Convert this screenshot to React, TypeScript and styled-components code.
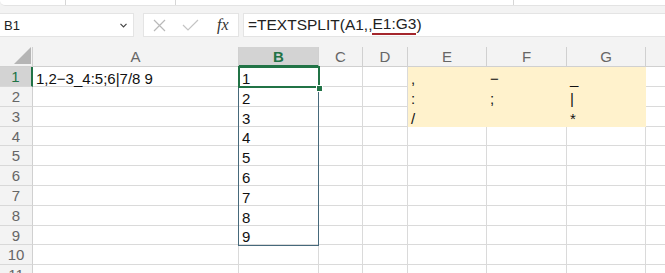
import React from 'react';
import styled, { createGlobalStyle } from 'styled-components';

const GREEN = '#217346';
const GRID = '#dadada';
const FILL = '#fff2cc';

const GlobalStyle = createGlobalStyle`
  html, body {
    margin: 0;
    padding: 0;
    background: #ffffff;
    overflow: hidden;
  }
  body {
    font-family: "Liberation Sans", Arial, sans-serif;
  }
`;

interface Column {
  key: string;
  width: number;
}

const columns: Column[] = [
  { key: 'A', width: 206 },
  { key: 'B', width: 80 },
  { key: 'C', width: 44 },
  { key: 'D', width: 45 },
  { key: 'E', width: 79 },
  { key: 'F', width: 80 },
  { key: 'G', width: 79 },
  { key: 'H', width: 60 },
];

const rowHeights = [20, 20, 20, 19, 20, 20, 20, 20, 19, 20, 20];

const cellText: Record<string, string> = {
  A1: '1,2−3_4:5;6|7/8 9',
  B1: '1',
  B2: '2',
  B3: '3',
  B4: '4',
  B5: '5',
  B6: '6',
  B7: '7',
  B8: '8',
  B9: '9',
  E1: ',',
  E2: ':',
  E3: '/',
  F1: '−',
  F2: ';',
  G1: '_',
  G2: '|',
  G3: '*',
};

const isFilled = (col: string, row: number) => ['E', 'F', 'G'].includes(col) && row <= 3;

const Page = styled.div`
  width: 665px;
  height: 273px;
  overflow: hidden;
  background: #f3f3f3;
`;

const TopStrip = styled.div`
  display: flex;
  height: 6px;
  background: #ffffff;
  border-bottom: 1px solid #e3e3e3;
  border-bottom-left-radius: 5px;
  box-sizing: border-box;
`;

const StripGroup = styled.div<{ $w: number }>`
  width: ${(p) => p.$w}px;
  border-right: 1px solid #d6d6d6;
  box-sizing: border-box;
  flex-shrink: 0;
`;

const FormulaRow = styled.div`
  display: flex;
  padding: 7px 0 10px 0;
  height: 24px;
`;

const NameBox = styled.div`
  width: 134px;
  box-sizing: border-box;
  background: #ffffff;
  border: 1px solid #e4e4e4;
  border-left: none;
  display: flex;
  align-items: center;
  justify-content: space-between;
  padding: 0 6px 0 4px;
  font-size: 13px;
  color: #222;
`;

const IconBox = styled.div`
  width: 96px;
  margin-left: 9px;
  box-sizing: border-box;
  background: #ffffff;
  border: 1px solid #e4e4e4;
  display: flex;
  align-items: center;
  padding-left: 9px;
  gap: 16px;
`;

const Fx = styled.span`
  font-family: "Liberation Serif", "Times New Roman", serif;
  font-style: italic;
  font-size: 16px;
  color: #333;
  margin-left: 2px;
`;

const FormulaInput = styled.div`
  flex: 1;
  margin-left: 4px;
  background: #ffffff;
  border: 1px solid #e4e4e4;
  border-right: none;
  display: flex;
  align-items: center;
  padding-left: 4px;
  font-size: 15.5px;
  color: #222;
  white-space: pre;
`;

const RefUnderline = styled.span`
  border-bottom: 2px solid #a4262c;
`;

const Sheet = styled.div`
  position: relative;
  display: grid;
  grid-template-columns: 33px ${columns.map((c) => `${c.width}px`).join(' ')};
  grid-template-rows: 20px ${rowHeights.map((h) => `${h}px`).join(' ')};
  background: #ffffff;
`;

const Corner = styled.div`
  background: #f3f3f3;
  border-right: 1px solid #d0d0d0;
  border-bottom: 1px solid #d0d0d0;
  box-sizing: border-box;
  display: flex;
  align-items: flex-end;
  justify-content: flex-end;
  padding: 0 1px 2px 0;
`;

const ColHeader = styled.div<{ $active?: boolean }>`
  box-sizing: border-box;
  background: ${(p) => (p.$active ? '#d3d3d3' : '#f3f3f3')};
  border-right: 1px solid #d0d0d0;
  border-bottom: ${(p) => (p.$active ? `2px solid ${GREEN}` : '1px solid #d0d0d0')};
  display: flex;
  align-items: center;
  justify-content: center;
  font-size: 15px;
  font-weight: ${(p) => (p.$active ? 700 : 400)};
  color: ${(p) => (p.$active ? GREEN : '#666666')};
  padding-top: ${(p) => (p.$active ? 1 : 0)}px;
`;

const RowHeader = styled.div<{ $active?: boolean }>`
  box-sizing: border-box;
  background: ${(p) => (p.$active ? '#d3d3d3' : '#f3f3f3')};
  border-right: ${(p) => (p.$active ? `2px solid ${GREEN}` : '1px solid #d0d0d0')};
  border-bottom: 1px solid #d8d8d8;
  display: flex;
  align-items: center;
  justify-content: center;
  font-size: 15px;
  color: ${(p) => (p.$active ? GREEN : '#666666')};
`;

const Cell = styled.div<{ $filled?: boolean }>`
  box-sizing: border-box;
  background: ${(p) => (p.$filled ? FILL : '#ffffff')};
  border-right: 1px solid ${(p) => (p.$filled ? FILL : GRID)};
  border-bottom: 1px solid ${(p) => (p.$filled ? FILL : GRID)};
  display: flex;
  align-items: flex-end;
  padding: 0 2px 1px 3px;
  font-size: 15px;
  line-height: 12px;
  color: #111111;
  white-space: pre;
  overflow: visible;
`;

const SpillBorder = styled.div`
  position: absolute;
  left: 238px;
  top: 19px;
  width: 81px;
  height: 180px;
  border: 1px solid #46697b;
  box-sizing: border-box;
  pointer-events: none;
`;

const Selection = styled.div`
  position: absolute;
  left: 238px;
  top: 19px;
  width: 82px;
  height: 22px;
  border: 2px solid ${GREEN};
  box-sizing: border-box;
  pointer-events: none;
`;

const FillHandle = styled.div`
  position: absolute;
  left: 316px;
  top: 38px;
  width: 7px;
  height: 7px;
  background: ${GREEN};
  border: 1px solid #ffffff;
  box-sizing: border-box;
`;

const CrossIcon = () => (
  <svg width="13" height="13" viewBox="0 0 13 13">
    <path d="M1 1 L12 12 M12 1 L1 12" stroke="#b9b9b9" strokeWidth="1.2" fill="none" />
  </svg>
);

const CheckIcon = () => (
  <svg width="17" height="12" viewBox="0 0 17 12">
    <path d="M1 6 L6 11 L16 1" stroke="#c4c4c4" strokeWidth="1.2" fill="none" />
  </svg>
);

const Chevron = () => (
  <svg width="7" height="5" viewBox="0 0 7 5">
    <path d="M0.5 0.8 L3.5 3.8 L6.5 0.8" stroke="#444" strokeWidth="1.2" fill="none" />
  </svg>
);

const CornerTriangle = () => (
  <svg width="17" height="17" viewBox="0 0 17 17">
    <polygon points="17,0 17,17 0,17" fill="#b5b5b5" />
  </svg>
);

const App: React.FC = () => {
  return (
    <Page>
      <GlobalStyle />
      <TopStrip>
        <StripGroup $w={66} />
        <StripGroup $w={110} />
        <StripGroup $w={338} />
      </TopStrip>
      <FormulaRow>
        <NameBox>
          <span>B1</span>
          <Chevron />
        </NameBox>
        <IconBox>
          <CrossIcon />
          <CheckIcon />
          <Fx>fx</Fx>
        </IconBox>
        <FormulaInput>
          =TEXTSPLIT(A1,,<RefUnderline>E1:G3</RefUnderline>)
        </FormulaInput>
      </FormulaRow>
      <Sheet>
        <Corner>
          <CornerTriangle />
        </Corner>
        {columns.map((c) => (
          <ColHeader key={c.key} $active={c.key === 'B'}>
            {c.key === 'H' ? '' : c.key}
          </ColHeader>
        ))}
        {rowHeights.map((_, i) => {
          const row = i + 1;
          return (
            <React.Fragment key={row}>
              <RowHeader $active={row === 1}>{row}</RowHeader>
              {columns.map((c) => (
                <Cell key={c.key} $filled={isFilled(c.key, row)}>
                  {cellText[`${c.key}${row}`] ?? ''}
                </Cell>
              ))}
            </React.Fragment>
          );
        })}
        <SpillBorder />
        <Selection />
        <FillHandle />
      </Sheet>
    </Page>
  );
};

export default App;
